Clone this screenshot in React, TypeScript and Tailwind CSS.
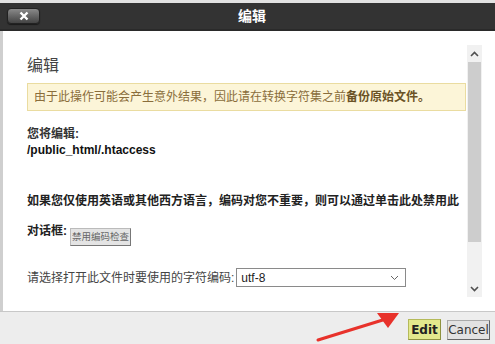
import React from 'react';

const cjk = { fontFamily: '"Liberation Sans", "Noto Sans CJK SC", sans-serif' };
const verdana = { fontFamily: '"DejaVu Sans", "Noto Sans CJK SC", sans-serif' };

function Scrollbar() {
  return (
    <div className="mt-[14px] flex h-[252px] w-[15px] flex-col bg-[#f1f1f1]">
      <div className="flex h-[17px] items-center justify-center">
        <svg width="9" height="6" viewBox="0 0 9 6">
          <path d="M1 5 L4.5 1.5 L8 5" fill="none" stroke="#505050" strokeWidth="1.6" />
        </svg>
      </div>
      <div className="mx-[1px] h-[180px] bg-[#cdcdcd]" />
      <div className="flex-1" />
      <div className="flex h-[17px] items-center justify-center">
        <svg width="9" height="6" viewBox="0 0 9 6">
          <path d="M1 1 L4.5 4.5 L8 1" fill="none" stroke="#505050" strokeWidth="1.6" />
        </svg>
      </div>
    </div>
  );
}

export default function App() {
  return (
    <div className="relative h-[344px] w-[495px] overflow-hidden bg-[#ededed]" style={cjk}>
      <div className="h-[3px] bg-[#e2e2e2]" />

      <div className="flex h-[28px] items-center border-b-2 border-[#2a2a2a] bg-[#333333]">
        <button className="ml-[7px] flex h-[16px] w-[33px] items-center justify-center rounded-[4px] border border-[#222] bg-gradient-to-b from-[#8a8a8a] to-[#444] shadow-[0_1px_1px_rgba(0,0,0,0.5)]">
          <svg width="10" height="10" viewBox="0 0 10 10">
            <path d="M1.5 1.5 L8.5 8.5 M8.5 1.5 L1.5 8.5" stroke="#fff" strokeWidth="2.4" />
          </svg>
        </button>
        <div className="ml-[198px] text-[14px] font-bold text-white">编辑</div>
      </div>

      <div className="flex h-[280px] border-l-[3px] border-[#cfcfcf] bg-white">
        <div className="w-[464px] pl-[24px] text-[12px] text-[#333]">
          <div className="mt-[25px] h-[20px] text-[16px] leading-[20px] text-[#444]">编辑</div>
          <div className="mt-[7px] flex h-[28px] w-[439px] items-center border border-[#eadca0] bg-[#fcf5d8] pl-[6px] text-[#8a6d3b]">
            由于此操作可能会产生意外结果，因此请在转换字符集之前
            <span className="font-bold text-[#6b5326]">备份原始文件。</span>
          </div>
          <div className="mt-[15px] font-bold leading-[16px] text-[#333]">您将编辑:</div>
          <div className="font-bold leading-[16px] text-[#111]">/public_html/.htaccess</div>
          <div className="mt-[35px] font-bold leading-[16px] text-[#222]">
            如果您仅使用英语或其他西方语言，编码对您不重要，则可以通过单击此处禁用此
          </div>
          <div className="mt-[14px] flex items-start">
            <span className="font-bold leading-[16px] text-[#222]">对话框:</span>
            <button className="ml-[3px] mt-[5px] h-[18px] w-[61px] whitespace-nowrap border border-[#bbb] border-b-[#777] border-r-[#777] bg-[#e4e4e4] p-0 text-[9.5px] leading-[16px] text-[#666]">
              禁用编码检查
            </button>
          </div>
          <div className="mt-[22px] flex items-center">
            <span className="text-[#444]">请选择打开此文件时要使用的字符编码:</span>
            <div className="ml-[2px] flex h-[19px] w-[170px] items-center justify-between border border-[#8a8a8a] pl-[4px] pr-[6px] text-[12px] text-[#222]">
              <span>utf-8</span>
              <svg width="9" height="6" viewBox="0 0 9 6">
                <path d="M1 1 L4.5 4.5 L8 1" fill="none" stroke="#666" strokeWidth="1" />
              </svg>
            </div>
          </div>
        </div>
        <Scrollbar />
      </div>

      <div className="flex h-[33px] items-start justify-end gap-[6px] border-t border-[#c8c8c8] pr-[5px] pt-[7px]" style={verdana}>
        <button className="h-[21px] w-[33px] border border-[#b5ba5a] border-b-[#8e9240] border-r-[#8e9240] bg-[#e3e98d] text-[12px] font-bold text-[#222]">
          Edit
        </button>
        <button className="mt-[1px] h-[20px] w-[43px] border border-[#aaa] border-b-[#666] border-r-[#666] bg-[#e2e2e2] text-[12px] text-[#333]">
          Cancel
        </button>
      </div>

      <svg className="pointer-events-none absolute left-0 top-0" width="495" height="344" viewBox="0 0 495 344">
        <path d="M318 340 L386 319" stroke="#e8322b" strokeWidth="3" strokeLinecap="round" />
        <polygon points="399,313 377,313 388,328" fill="#e8322b" />
      </svg>
    </div>
  );
}
